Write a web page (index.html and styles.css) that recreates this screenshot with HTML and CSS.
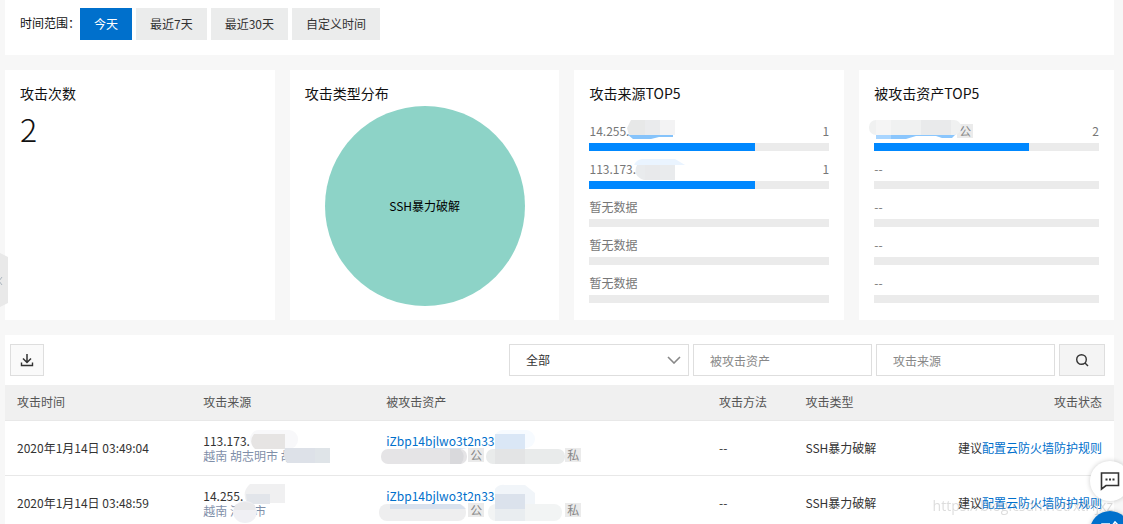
FILE: index.html
```html
<!DOCTYPE html>
<html lang="zh-CN">
<head>
<meta charset="utf-8">
<title>攻击统计</title>
<link rel="stylesheet" href="styles.css">
</head>
<body>
<main class="page">
  <section class="range">
    <span class="range-label">时间范围：</span>
    <div class="range-options">
      <button class="range-btn active" type="button">今天</button>
      <button class="range-btn" type="button">最近7天</button>
      <button class="range-btn" type="button">最近30天</button>
      <button class="range-btn" type="button">自定义时间</button>
    </div>
  </section>

  <section class="cards">
    <article class="card">
      <h2 class="card-title">攻击次数</h2>
      <p class="count">2</p>
    </article>
    <article class="card">
      <h2 class="card-title">攻击类型分布</h2>
      <div class="pie"><span>SSH暴力破解</span></div>
    </article>
    <article class="card">
      <h2 class="card-title">攻击来源TOP5</h2>
      <ul class="rank">
        <li>
          <div class="rank-row"><span>14.255.</span><span>1</span></div>
          <div class="bar"><div class="bar-fill" style="width:69%"></div></div>
          <svg class="mask" width="100" height="26" viewBox="0 0 100 26"><path d="M38 15l6 5h18l8-2h14v-3z" fill="#85c3fb"/><path d="M42 1h44v15H40l-2-7z" fill="#e7e8e8"/><path d="M56 1h15v15H56z" fill="#eaebed"/><path d="M71 1h15v15H71z" fill="#f3f3f4"/></svg>
        </li>
        <li>
          <div class="rank-row"><span>113.173.</span><span>1</span></div>
          <div class="bar"><div class="bar-fill" style="width:69%"></div></div>
          <svg class="mask" width="100" height="26" viewBox="0 0 100 26"><path d="M45 8q2-5 8-6h33l10 6z" fill="#eaf4ff"/><path d="M48 8h38v15H55q-12-4-7-15z" fill="#e9ebed"/><path d="M56 8h15v15H56z" fill="#e8e9eb"/></svg>
        </li>
        <li><div class="rank-row"><span>暂无数据</span></div><div class="bar"></div></li>
        <li><div class="rank-row"><span>暂无数据</span></div><div class="bar"></div></li>
        <li><div class="rank-row"><span>暂无数据</span></div><div class="bar"></div></li>
      </ul>
    </article>
    <article class="card">
      <h2 class="card-title">被攻击资产TOP5</h2>
      <ul class="rank">
        <li>
          <div class="rank-row"><span class="tag rank-tag">公</span><span>2</span></div>
          <div class="bar"><div class="bar-fill" style="width:69%"></div></div>
          <svg class="mask mask-asset" width="100" height="26" viewBox="0 0 100 26"><path d="M2 15h80l-4 4H68l-6-2H42l-10 3H2z" fill="#8ac6fd"/><path d="M2 15h15v5H2z" fill="#a8d5ff"/><rect x="-5" y="1" width="92" height="15" rx="7" fill="#f0f1f1"/><path d="M2 1h15v15H2z" fill="#f5f5f5"/><path d="M47 1h30v15H47z" fill="#e9eaeb"/></svg>
        </li>
        <li><div class="rank-row"><span>--</span></div><div class="bar"></div></li>
        <li><div class="rank-row"><span>--</span></div><div class="bar"></div></li>
        <li><div class="rank-row"><span>--</span></div><div class="bar"></div></li>
        <li><div class="rank-row"><span>--</span></div><div class="bar"></div></li>
      </ul>
    </article>
  </section>

  <section class="events">
    <form class="toolbar">
      <button class="icon-btn download" type="button" aria-label="下载">
        <svg width="14" height="14" viewBox="0 0 14 14" fill="none" stroke="#333"><path d="M7 1v8M3 5.500l4 4 4-4" stroke-width="1.500"/><path d="M1.500 9.500v3h11v-3" stroke-width="1.400"/></svg>
      </button>
      <div class="filters">
        <select class="field" aria-label="筛选"><option>全部</option></select>
        <input class="field" type="text" placeholder="被攻击资产" aria-label="被攻击资产">
        <input class="field" type="text" placeholder="攻击来源" aria-label="攻击来源">
        <button class="icon-btn search" type="button" aria-label="搜索">
          <svg width="14" height="14" viewBox="0 0 14 14" fill="none" stroke="#333" stroke-width="1.400"><circle cx="6.500" cy="6.500" r="4.800"/><path d="M10 10l3 3"/></svg>
        </button>
      </div>
    </form>
    <table class="table">
      <colgroup><col class="c-time"><col class="c-source"><col class="c-asset"><col class="c-method"><col class="c-type"><col></colgroup>
      <thead>
        <tr><th>攻击时间</th><th>攻击来源</th><th>被攻击资产</th><th>攻击方法</th><th>攻击类型</th><th class="right">攻击状态</th></tr>
      </thead>
      <tbody>
        <tr>
          <td>2020年1月14日 03:49:04</td>
          <td><div class="cell"><div>113.173.</div><div class="place">越南 胡志明市 胡</div>
            <svg class="cell-mask" width="150" height="38" viewBox="0 0 150 38"><rect x="47" y="1" width="48" height="19" rx="9" fill="#f8f8fa"/><path d="M51 5h31v15H52q-7-7-1-15z" fill="#e6e4e3"/><path d="M82 19h45v15H84q-5-7-2-15z" fill="#dde1e8"/><path d="M112 19h15v15h-15z" fill="#dfe4e8"/></svg></div></td>
          <td><div class="cell"><div><a class="link" href="#">iZbp14bjlwo3t2n33</a></div><div class="ips"><span class="tag">公</span><span class="tag">私</span></div>
            <svg class="cell-mask" width="200" height="38" viewBox="0 0 200 38"><rect x="108" y="1" width="41" height="18" rx="9" fill="#f7fbff"/><path d="M109 5h30v15h-30z" fill="#dae7f6"/><path d="M14 20l20-1h40l7 1z" fill="#d8e5f3"/><rect x="-5" y="20" width="86" height="15" rx="7" fill="#e5e4e6"/><path d="M64 20h10q7 7 1 15H64z" fill="#d9d9dc"/><rect x="100" y="20" width="79" height="15" rx="7" fill="#e9ebeb"/><path d="M109 20h30v15h-30z" fill="#e3e4e5"/></svg></div></td>
          <td>--</td><td>SSH暴力破解</td>
          <td class="right">建议<a class="link" href="#">配置云防火墙防护规则</a></td>
        </tr>
        <tr>
          <td>2020年1月14日 03:48:59</td>
          <td><div class="cell"><div>14.255.</div><div class="place">越南 河内市</div>
            <svg class="cell-mask" width="150" height="42" viewBox="0 0 150 42"><path d="M47 0h35v19H44q-6-11 3-19z" fill="#f0f0f1"/><path d="M43 10h24v10H44z" fill="#e2e5ea"/><ellipse cx="42" cy="28" rx="12" ry="11" fill="#f0f0f4"/><path d="M32 21q10-6 20 0v5H31z" fill="#e8e8ea"/></svg></div></td>
          <td><div class="cell"><div><a class="link" href="#">iZbp14bjlwo3t2n33</a></div><div class="ips"><span class="tag">公</span><span class="tag">私</span></div>
            <svg class="cell-mask" width="200" height="38" viewBox="0 0 200 38"><path d="M109 5q4-5 10-4h20l10 8v11h-40z" fill="#f1f5f9"/><path d="M109 10h30v10h-30z" fill="#dbe2ec"/><rect x="-7" y="20" width="87" height="17" rx="8" fill="#eeeeef"/><path d="M4 20h70l6 5H4z" fill="#d9e1ed"/><rect x="102" y="20" width="74" height="17" rx="8" fill="#f2f4f4"/><path d="M109 20h30v5h-30z" fill="#dbe2ec"/><path d="M109 25h30v12h-30z" fill="#e9edf0"/></svg></div></td>
          <td>--</td><td>SSH暴力破解</td>
          <td class="right">建议<a class="link" href="#">配置云防火墙防护规则</a></td>
        </tr>
      </tbody>
    </table>
  </section>
</main>

<button class="drawer" type="button" aria-label="展开">
  <svg width="8" height="54" viewBox="0 0 8 54"><path d="M0 0l8 4v46l-8 4z" fill="#e9e9e9"/><path d="M2 24l-3 4 3 4" fill="none" stroke="#aab4be"/></svg>
</button>
<span class="watermark">https://blog.csdn.net/xtHjxz</span>
<div class="floats">
  <button class="float-btn" type="button" aria-label="咨询">
    <svg width="20" height="20" viewBox="0 0 20 20"><path d="M1.500 2h17v12.500H6L1.500 18z" fill="none" stroke="#333" stroke-width="1.600"/><path d="M5.500 7.500h2v2h-2zM9 7.500h2v2H9zM12.500 7.500h2v2h-2z" fill="#333"/></svg>
  </button>
  <button class="float-btn primary" type="button" aria-label="反馈">
    <svg width="20" height="20" viewBox="0 0 20 20" fill="none" stroke="#fff" stroke-width="1.600"><path d="M10 3H2v15h16v-8M9 12V9l6-8 3 3-6 8z"/></svg>
  </button>
</div>
</body>
</html>
```
FILE: styles.css
```css
* { box-sizing: border-box; }
html { scrollbar-width: none; }
body {
  margin: 0;
  background: #f7f7f7;
  color: #333;
  font: 12px/18px "Noto Sans CJK SC", sans-serif;
}
button, input, select { font: inherit; color: inherit; margin: 0; }
a { text-decoration: none; }
h2, p, ul { margin: 0; padding: 0; font-weight: 400; list-style: none; }

.page { display: flex; flex-direction: column; gap: 15px; padding: 0 9px 0 5px; }

.range { display: flex; align-items: flex-start; padding: 8px 15px 15px; background: #fff; }
.range-label { line-height: 30px; color: #111; }
.range-options { display: flex; gap: 4px; }
.range-btn { height: 32px; padding: 0 14px; border: 0; background: #ebecec; }
.range-btn.active { background: #0070cc; color: #fff; }

.cards { display: grid; grid-template-columns: 18fr 18fr 18fr 17fr; gap: 15px; }
.card { min-height: 250px; padding: 12px 15px 10px; background: #fff; }
.card-title { height: 24px; font-size: 14px; line-height: 22px; color: #111; }
.count { font-size: 32px; line-height: 44px; font-weight: 300; color: #111; }
.pie {
  display: grid;
  place-items: center;
  width: 200px;
  height: 200px;
  margin: 0 auto;
  border-radius: 50%;
  background: #8dd3c7;
  color: #000;
}

.rank { padding-top: 13px; color: #777; }
.rank li { position: relative; height: 38px; }
.rank-row { display: flex; justify-content: space-between; height: 24px; line-height: 24px; }
.bar { height: 8px; background: #ebebeb; }
.bar-fill { height: 100%; background: #08f; }
.mask { position: absolute; top: 0; left: 0; overflow: visible; }
.rank-tag { align-self: center; margin-left: 83px; }
.tag { width: 16px; height: 14px; background: #ebebeb; color: #888; line-height: 14px; text-align: center; }

.events { background: #fff; }
.toolbar { display: flex; justify-content: space-between; padding: 9px 9px 9px 5px; }
.filters { display: flex; gap: 4px; }
.field {
  width: 179px;
  height: 32px;
  padding: 0 16px;
  border: 1px solid #dedede;
  border-radius: 0;
  background: #fff;
}
.field::placeholder { color: #888; }
select.field {
  appearance: none;
  width: 180px;
  background: url("data:image/svg+xml,%3Csvg xmlns='http://www.w3.org/2000/svg' width='14' height='8'%3E%3Cpath d='M1 1l6 6 6-6' fill='none' stroke='%23888' stroke-width='1.600'/%3E%3C/svg%3E") no-repeat right 7px center #fff;
}
.icon-btn { display: grid; place-items: center; height: 32px; padding: 0; border: 1px solid #dedede; background: #fafafa; }
.download { width: 34px; }
.search { width: 46px; background: #f4f4f4; }

.table { width: 100%; table-layout: fixed; border-collapse: collapse; }
.c-time { width: 16.8%; }
.c-source { width: 16.5%; }
.c-asset { width: 30%; }
.c-method { width: 7.8%; }
.c-type { width: 12%; }
.table th, .table td { padding: 0 12px; border-bottom: 1px solid #e8e8e8; text-align: left; font-weight: 400; white-space: nowrap; }
.table th { height: 35px; background: #f0f0f0; color: #555; }
.table td { height: 55px; }
.table .right { text-align: right; }
.cell { position: relative; line-height: 15px; }
.place { color: #7f8fa9; }
.cell-mask { position: absolute; top: -4px; left: 0; overflow: visible; }
.ips { display: flex; gap: 81px; padding-left: 82px; }
.link { color: #0070cc; }

.drawer { position: fixed; top: 253px; left: 0; display: flex; padding: 0; border: 0; background: none; }
.watermark { position: fixed; right: 10px; bottom: 6px; color: rgba(120, 120, 120, .25); font: 14px/24px "Open Sans", sans-serif; }
.floats { position: fixed; right: -7px; bottom: -27px; display: flex; flex-direction: column; gap: 10px; }
.float-btn {
  display: grid;
  place-items: center;
  width: 40px;
  height: 40px;
  padding: 0;
  border: 0;
  border-radius: 50%;
  background: #fff;
  box-shadow: 0 0 5px rgba(0, 0, 0, .2);
}
.float-btn.primary { background: #0070cc; }
```
